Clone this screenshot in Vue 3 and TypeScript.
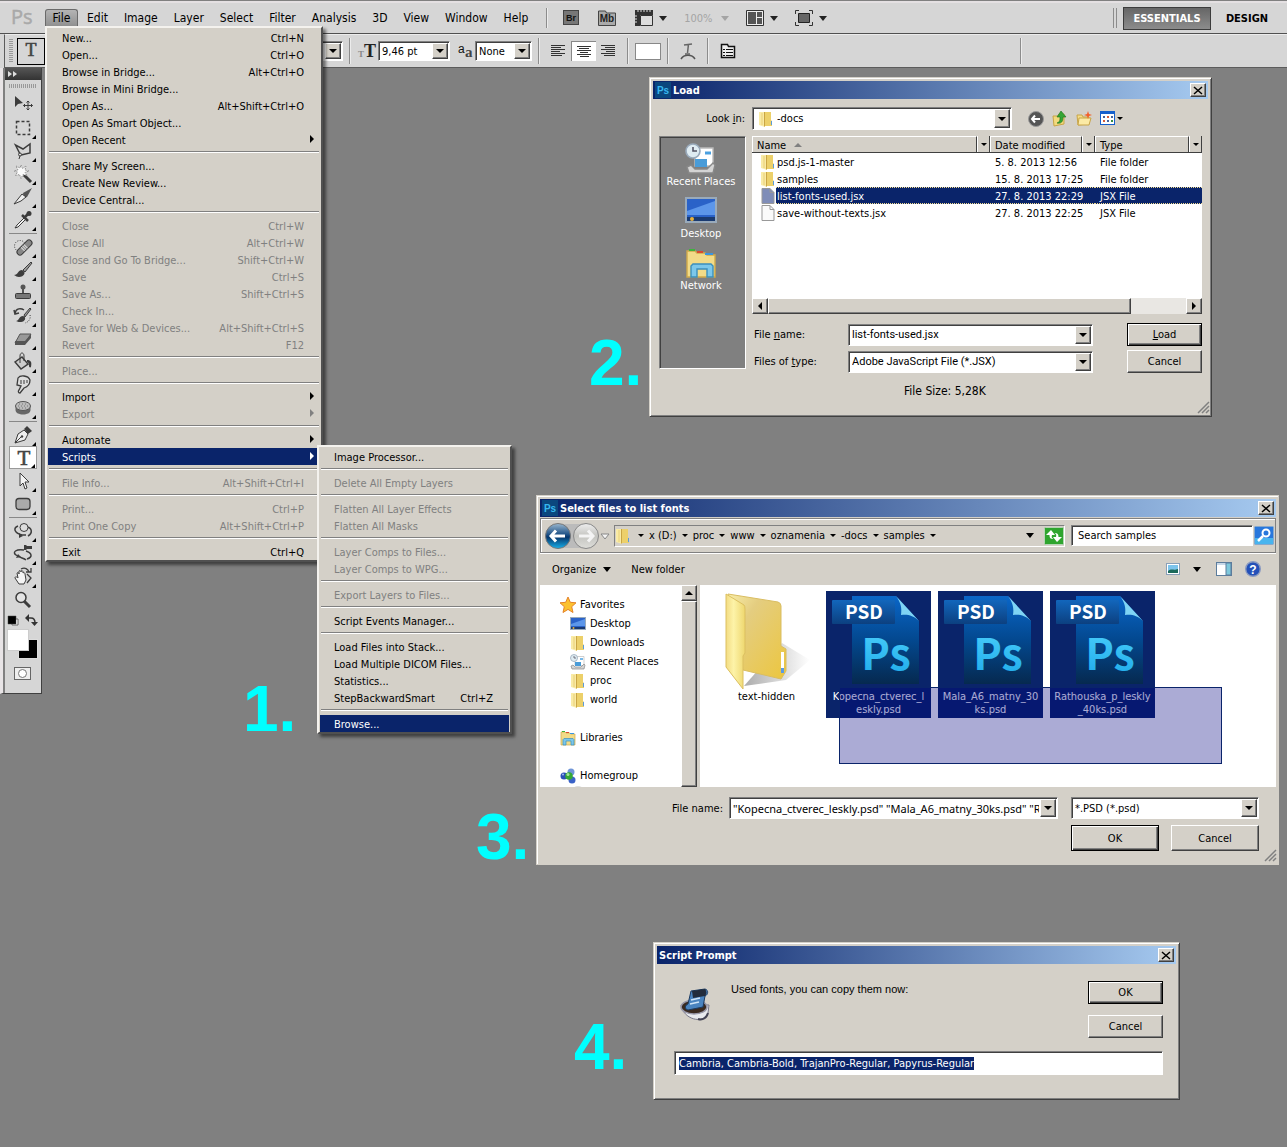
<script setup lang="ts">
import { onMounted, ref } from 'vue'

interface MenuEntry {
  label?: string
  keys?: string
  off?: boolean
  sub?: boolean
  on?: boolean
}

const sep: MenuEntry = {}

const fileMenu: MenuEntry[] = [
  { label: 'New...', keys: 'Ctrl+N' },
  { label: 'Open...', keys: 'Ctrl+O' },
  { label: 'Browse in Bridge...', keys: 'Alt+Ctrl+O' },
  { label: 'Browse in Mini Bridge...' },
  { label: 'Open As...', keys: 'Alt+Shift+Ctrl+O' },
  { label: 'Open As Smart Object...' },
  { label: 'Open Recent', sub: true },
  sep,
  { label: 'Share My Screen...' },
  { label: 'Create New Review...' },
  { label: 'Device Central...' },
  sep,
  { label: 'Close', keys: 'Ctrl+W', off: true },
  { label: 'Close All', keys: 'Alt+Ctrl+W', off: true },
  { label: 'Close and Go To Bridge...', keys: 'Shift+Ctrl+W', off: true },
  { label: 'Save', keys: 'Ctrl+S', off: true },
  { label: 'Save As...', keys: 'Shift+Ctrl+S', off: true },
  { label: 'Check In...', off: true },
  { label: 'Save for Web & Devices...', keys: 'Alt+Shift+Ctrl+S', off: true },
  { label: 'Revert', keys: 'F12', off: true },
  sep,
  { label: 'Place...', off: true },
  sep,
  { label: 'Import', sub: true },
  { label: 'Export', sub: true, off: true },
  sep,
  { label: 'Automate', sub: true },
  { label: 'Scripts', sub: true, on: true },
  sep,
  { label: 'File Info...', keys: 'Alt+Shift+Ctrl+I', off: true },
  sep,
  { label: 'Print...', keys: 'Ctrl+P', off: true },
  { label: 'Print One Copy', keys: 'Alt+Shift+Ctrl+P', off: true },
  sep,
  { label: 'Exit', keys: 'Ctrl+Q' },
]

const scriptsMenu: MenuEntry[] = [
  { label: 'Image Processor...' },
  sep,
  { label: 'Delete All Empty Layers', off: true },
  sep,
  { label: 'Flatten All Layer Effects', off: true },
  { label: 'Flatten All Masks', off: true },
  sep,
  { label: 'Layer Comps to Files...', off: true },
  { label: 'Layer Comps to WPG...', off: true },
  sep,
  { label: 'Export Layers to Files...', off: true },
  sep,
  { label: 'Script Events Manager...' },
  sep,
  { label: 'Load Files into Stack...' },
  { label: 'Load Multiple DICOM Files...' },
  { label: 'Statistics...' },
  { label: 'StepBackwardSmart', keys: 'Ctrl+Z' },
  sep,
  { label: 'Browse...', on: true },
]

const menus = [
  { cls: 'file-menu', items: fileMenu },
  { cls: 'scripts-menu', items: scriptsMenu },
]

const barItems = ['File', 'Edit', 'Image', 'Layer', 'Select', 'Filter', 'Analysis', '3D', 'View', 'Window', 'Help']

interface Tool {
  name: string
  art: string
  flat?: boolean
  active?: boolean
}

const k = '#3c3c3c'
const toolGroups: Tool[][] = [
  [
    { name: 'Move', flat: true, art: `<path d="M2 1v11l3-3 5-1z" fill="${k}"/><path d="M15 6v9M10.500 10.500h9M13.500 7.500l1.500-1.500 1.500 1.500M13.500 13.500l1.500 1.500 1.500-1.500M12 9l-1.500 1.500 1.500 1.500M18 9l1.500 1.500L18 12" fill="none" stroke="${k}"/>` },
    { name: 'Marquee', art: `<rect x="3.500" y="3.500" width="13" height="13" fill="none" stroke="${k}" stroke-width="1.500" stroke-dasharray="3 2"/>` },
    { name: 'Lasso', art: `<path d="M7 13L2.500 4 10 8l7-5v9l-9 2" fill="none" stroke="${k}" stroke-width="1.500"/><circle cx="7" cy="13.500" r="1.500" fill="#ddd" stroke="${k}"/><path d="M7 15l-1 3" stroke="${k}"/>` },
    { name: 'Wand', art: `<path d="M11 11l7 7" stroke="${k}" stroke-width="3"/><path d="M8 1l1.500 3.500L13 2l-1 4 4 1-4 1.500 2 3-4-1-2 4-1.500-4-4 1 2-3.500L1 7l4-1-2-4 4 2z" fill="#fafafa" stroke="#777" stroke-width=".8" stroke-dasharray="1.500 1"/>` },
    { name: 'Slice', art: `<path d="M10 6l9-5-5 9-3 1z" fill="#555"/><path d="M1 17l8-10 4 3-5 4z" fill="#eee" stroke="${k}"/>` },
    { name: 'Eyedropper', art: `<path d="M12 7l-8 8-2 3 3-1 8-8" fill="#f4f4f4" stroke="${k}"/><path d="M9 5l6 6M12 7l4-4" stroke="${k}" stroke-width="2.500"/><circle cx="16" cy="3.500" r="2.500" fill="${k}"/>` },
  ],
  [
    { name: 'Healing Brush', art: `<circle cx="7" cy="9" r="5.500" fill="none" stroke="${k}" stroke-dasharray="1 1.500"/><path d="M7 15l9-9" stroke="${k}" stroke-width="7" stroke-linecap="round"/><path d="M7 15l9-9" stroke="#888" stroke-width="5" stroke-linecap="round"/><path d="M9.500 12.500l4-4" stroke="#ddd" stroke-width="5" stroke-dasharray="1 1"/>` },
    { name: 'Brush', art: `<path d="M10 10l8-8 1 1-7 9z" fill="#999" stroke="${k}"/><path d="M1 15c4 0 4-5 8-5 5 2 2 7-3 7-2 0-3-1-5-2z" fill="${k}"/>` },
    { name: 'Stamp', art: `<circle cx="10" cy="4" r="2.500" fill="#555"/><path d="M9 5h2v5H9z" fill="#555"/><rect x="2.500" y="10.500" width="15" height="5" rx="1" fill="#777" stroke="${k}"/>` },
    { name: 'History Brush', art: `<path d="M11 9l6-7 1 1-6 8z" fill="#999" stroke="${k}"/><path d="M3 15c3 0 3-5 7-5 4 1 2 6-2 6-2 0-3 0-5-1z" fill="${k}"/><path d="M2 7c1-5 6-5 9-3M1 4l1 4 4-1" fill="none" stroke="${k}" stroke-width="1.500"/><path d="M17 9c1 3-1 7-5 8" fill="none" stroke="${k}" stroke-dasharray="1 1.500"/>` },
    { name: 'Eraser', art: `<path d="M7 5h11l-6 9H2z" fill="#999" stroke="#555"/><path d="M2 12l10 0 6-7v4l-6 7H2z" fill="#555"/>` },
    { name: 'Paint Bucket', art: `<path d="M2 10l7-5 6 7-7 5z" fill="#ccc" stroke="${k}" stroke-width="1.500"/><path d="M7 11V4c0-4 4-4 4 0v5" fill="none" stroke="${k}"/><path d="M14 8c4 0 5 2 4 7-1 1-2 0-2-1 0-3-1-4-2-4z" fill="${k}"/>` },
    { name: 'Smudge', art: `<path d="M5 3c2-3 10-3 12 2 0 5-3 7-6 8l-4 5c-2 0-2-2-1-3l2-4-4-1z" fill="#ddd" stroke="${k}" stroke-width="1.300"/><path d="M8 5v4M11 5v4M14 5v3" stroke="${k}"/>` },
    { name: 'Sponge', art: `<path d="M2.500 8v4c0 6 15 6 15 0V8z" fill="#666"/><ellipse cx="10" cy="8" rx="7.500" ry="4.500" fill="#bbb" stroke="#555"/><path d="M5 8h10M6 6h8M6 10h8" stroke="#777" stroke-dasharray="1 2"/>` },
  ],
  [
    { name: 'Pen', art: `<path d="M2 18L5 9l6-4 4 4-3 6z" fill="#eee" stroke="${k}"/><path d="M2 18l6-6" stroke="${k}"/><circle cx="9" cy="11.500" r="1.200" fill="${k}"/><path d="M11 4l3-3 5 5-4 3z" fill="${k}"/>` },
    { name: 'Type', active: true, art: `<text x="11" y="17" font-family="Liberation Serif, serif" font-size="21" text-anchor="middle" fill="#444" stroke="#444" stroke-width=".6">T</text>` },
    { name: 'Path Selection', art: `<path d="M7 2v13l3-3 2 6 2-1-2-6h4z" fill="#f4f4f4" stroke="${k}"/>` },
    { name: 'Rectangle', art: `<rect x="3" y="4.500" width="14" height="11" rx="3" fill="#aaa" stroke="${k}" stroke-width="1.300"/>` },
  ],
  [
    { name: '3D Rotate', art: `<path d="M5 5c-5 2-4 7 4 9h4M14 6c5 1 6 6 1 9" fill="none" stroke="${k}" stroke-width="1.500"/><path d="M6 12l4 3-4 2z" fill="${k}"/><circle cx="11" cy="6.500" r="4" fill="#ddd" stroke="${k}"/>` },
    { name: '3D Camera', art: `<path d="M11 6C3 5-1 8 3 11s8 3 10 5M13 7c6 2 7 6 1 8" fill="none" stroke="${k}" stroke-width="1.500"/><path d="M5 10l3 3-5 1z" fill="${k}"/><path d="M11 1h2l1 1h5v3h-5l-1 1h-2z" fill="${k}"/>` },
    { name: 'Hand', art: `<path d="M6 17l-4-6c0-2 2-1 3 0L4 6c1-1 2 0 2 1V4c1-1 2 0 2 1V4c1-1 2 0 2 1v1c1-1 2 0 2 1l1 6-2 4z" fill="#f4f4f4" stroke="${k}"/><path d="M8 2c4-2 7 0 8 3M13 5h5V1M14 7l4 4-4 5" fill="none" stroke="${k}" stroke-width="1.300"/>` },
    { name: 'Zoom', flat: true, art: `<path d="M11 11l6 6" stroke="${k}" stroke-width="3"/><circle cx="8" cy="7.500" r="5" fill="#e4e4e4" stroke="${k}" stroke-width="1.500"/>` },
  ],
]

const folder = `<path d="M1 1h6v15l-6-2z" fill="#f9eba6"/><path d="M7 1h6v8l1 1v5H7z" fill="#ecd06a"/><path d="M6.500 1v14.500" stroke="#c9a545"/><path d="M4 2v12" stroke="#e9cf78"/><path d="M13 10h1v4h-1z" fill="#5b9bd8"/>`
const sheet = (fill: string) => `<path d="M2 .500h8l4 4v11H2z" fill="${fill}" stroke="#999"/><path d="M10 .500v4h4" fill="none" stroke="#999"/>`
const monitor = `<rect x=".500" y="1.500" width="15" height="12" fill="#2a62c8" stroke="#9ab"/><path d="M1 8L15 3v7H1z" fill="#5c96ea"/><path d="M1 11h14v2H1z" fill="#1a3a70"/><circle cx="3.500" cy="12" r="1" fill="#e8b13c"/>`
const recent = `<path d="M5 2.500h9v9H5z" fill="#fff" stroke="#bbb" stroke-width=".7"/><path d="M10 5h3" stroke="#4aa0e0" stroke-width="1.500"/><path d="M5 8h6v4H5z" fill="#4a9cd8"/><path d="M1 12l2-1 2 2h6l3-3 1 1-1 4H2z" fill="#d4d4d4" stroke="#888" stroke-width=".7"/><circle cx="4" cy="4" r="3.500" fill="#dfecf2" stroke="#9ab" stroke-width=".8"/><path d="M4 2v2h2" fill="none" stroke="#556" stroke-width=".8"/>`
const library = `<path d="M1 2h4l1 1h4l1 1h4v11H1z" fill="#f2db88" stroke="#cfa94a" stroke-width=".7"/><path d="M2 1h3v1H2z" fill="#3eb23e"/><path d="M6 2h3v1H6z" fill="#d84a30"/><path d="M10 3h4v1h-4z" fill="#3a96e0"/><path d="M3 15V9.500l1-1h9l1 1V15h-3v-4H6v4z" fill="#7cc7ea" stroke="#3b8fbd" stroke-width=".7"/>`

const places = [
  { label: 'Recent Places', art: recent },
  { label: 'Desktop', art: monitor },
  { label: 'Network', art: library },
]

const files = [
  { name: 'psd.js-1-master', date: '5. 8. 2013 12:56', type: 'File folder', art: folder },
  { name: 'samples', date: '15. 8. 2013 17:25', type: 'File folder', art: folder },
  { name: 'list-fonts-used.jsx', date: '27. 8. 2013 22:29', type: 'JSX File', art: sheet('#7f8db8'), on: true },
  { name: 'save-without-texts.jsx', date: '27. 8. 2013 22:25', type: 'JSX File', art: sheet('#fafafa') },
]

const crumbs = ['x (D:)', 'proc', 'www', 'oznamenia', '-docs', 'samples']

const tree = [
  { label: 'Favorites', art: `<path d="M8 0l2.300 5.300 5.700.5-4.300 3.900L13 15.500 8 12.400 3 15.500l1.300-5.800L0 5.800l5.700-.5z" fill="#fcc12e" stroke="#e4832a"/>` },
  { label: 'Desktop', child: true, art: monitor },
  { label: 'Downloads', child: true, art: folder },
  { label: 'Recent Places', child: true, art: recent },
  { label: 'proc', child: true, art: folder },
  { label: 'world', child: true, art: folder },
  { label: 'Libraries', gap: true, art: library },
  { label: 'Homegroup', gap: true, art: `<circle cx="11" cy="4" r="3.500" fill="#6f95d8"/><circle cx="4" cy="8" r="3.500" fill="#2b50b8"/><circle cx="12" cy="12" r="3.500" fill="#3a62c8"/><circle cx="9" cy="8" r="3.800" fill="#35a835"/><circle cx="8" cy="6.500" r="1.500" fill="#a5e49c"/><circle cx="3" cy="6.500" r="1" fill="#a9c0f0"/>` },
]

const psds = [
  ['Kopecna_ctverec_l', 'eskly.psd'],
  ['Mala_A6_matny_30', 'ks.psd'],
  ['Rathouska_p_leskly', '_40ks.psd'],
]

const steps = ['1.', '2.', '3.', '4.']

const fontsField = ref<HTMLInputElement | null>(null)
onMounted(() => {
  fontsField.value?.focus({ preventScroll: true })
  fontsField.value?.select()
})
</script>

<template>
  <main class="desk">
    <header class="menubar">
      <svg class="logo" width="24" height="24" viewBox="0 0 24 24"><text x="0" y="18" font-family="Open Sans, sans-serif" font-size="20" fill="#a9a9a9" stroke="#a9a9a9" stroke-width=".5">Ps</text></svg>
      <nav class="bar-items">
        <button v-for="(b, i) in barItems" :key="b" :class="{ open: i === 0 }">{{ b }}</button>
      </nav>
      <i class="rule"></i>
      <div class="launch">
        <button class="chip" aria-label="Bridge"><svg width="17" height="16" viewBox="0 0 17 16"><rect x=".5" y=".5" width="15" height="14" fill="#777" stroke="#444" /><text x="8" y="11" font-size="9" font-weight="bold" font-family="Liberation Sans, sans-serif" text-anchor="middle" fill="#111">Br</text></svg></button>
        <button class="chip" aria-label="Mini Bridge"><svg width="19" height="17" viewBox="0 0 19 17"><path d="M.5 15.500V1h7l1 2h9v12.500z" fill="#aaa" stroke="#444" /><text x="9" y="12" font-size="10" font-weight="bold" font-family="Liberation Sans, sans-serif" text-anchor="middle" fill="#222">Mb</text></svg></button>
        <button class="drop" aria-label="View extras"><svg width="18" height="16" viewBox="0 0 18 16"><path d="M0 0h18v5H5v11H0z" fill="#333" /><path d="M3 0v2M6 0v2M9 0v2M12 0v2M15 0v2M0 6h2M0 9h2M0 12h2" stroke="#ddd" /><path d="M5.500 5.500h12v10h-12z" fill="#ddd" stroke="#333" /></svg><span class="tri"></span></button>
        <button class="drop dim"><span>100%</span><span class="tri"></span></button>
        <button class="drop" aria-label="Arrange documents"><svg width="18" height="16" viewBox="0 0 18 16"><path d="M.5.5h17v15H.5z" fill="#eee" stroke="#333" /><path d="M2 2h8v12H2zM11 2h5v5h-5zM11 8h5v6h-5z" fill="#555" /></svg><span class="tri"></span></button>
        <button class="drop" aria-label="Screen mode"><svg width="18" height="16" viewBox="0 0 18 16"><path d="M.5 4V.5H4M14 .5h3.500V4M17.500 12v3.500H14M4 15.500H.5V12" fill="none" stroke="#333" /><path d="M3.500 3.500h11v9h-11z" fill="#666" stroke="#222" /></svg><span class="tri"></span></button>
      </div>
      <div class="workspaces">
        <button class="essentials">ESSENTIALS</button>
        <button class="design">DESIGN</button>
      </div>
    </header>

    <section class="options">
      <i class="grip"></i>
      <button class="tbox" aria-label="Type tool"><svg width="20" height="20" viewBox="0 0 20 20"><text x="10" y="15" font-family="Liberation Serif, serif" font-size="18" text-anchor="middle" fill="#444" stroke="#444" stroke-width=".6">T</text></svg></button>
      <span class="combo style-combo"><select aria-label="Font style"><option></option></select><span class="dd"></span></span>
      <i class="rule"></i>
      <svg class="tt" width="19" height="22" viewBox="0 0 19 22"><text x="0" y="17" font-family="Liberation Serif, serif" font-size="9" font-weight="bold" fill="#888">T</text><text x="6" y="17" font-family="Liberation Serif, serif" font-size="18" font-weight="bold" fill="#222">T</text></svg>
      <span class="combo size-combo"><select aria-label="Font size"><option>9,46 pt</option></select><span class="dd"></span></span>
      <svg class="aa" width="16" height="18" viewBox="0 0 16 18"><text x="0" y="11" font-family="Liberation Sans, sans-serif" font-size="12" fill="#111">a</text><text x="7" y="15" font-family="Liberation Serif, serif" font-size="15" font-weight="bold" fill="#444">a</text></svg>
      <span class="combo aa-combo"><select aria-label="Anti-aliasing"><option>None</option></select><span class="dd"></span></span>
      <i class="rule"></i>
      <div class="aligns">
        <button aria-label="Left align"><svg width="15" height="14"><path d="M0 1.500h14M0 3.500h10M0 5.500h14M0 7.500h9M0 9.500h14M0 11.500h11" stroke="#333" /></svg></button>
        <button class="pressed" aria-label="Center align"><svg width="15" height="14"><path d="M0 1.500h14M2 3.500h10M0 5.500h14M3 7.500h8M0 9.500h14M3 11.500h9" stroke="#333" /></svg></button>
        <button aria-label="Right align"><svg width="15" height="14"><path d="M0 1.500h14M4 3.500h10M0 5.500h14M5 7.500h9M0 9.500h14M3 11.500h11" stroke="#333" /></svg></button>
      </div>
      <i class="rule"></i>
      <button class="swatch" aria-label="Text color"></button>
      <i class="rule"></i>
      <button class="plain" aria-label="Warp text"><svg width="16" height="18" viewBox="0 0 16 18"><path d="M4 3l8-1M8.500 2L7.500 11M5 12h5" stroke="#666" stroke-width="1.500" fill="none" /><path d="M1 17c3-5 11-5 14 0" stroke="#555" stroke-width="1.500" fill="none" /></svg></button>
      <i class="rule"></i>
      <button class="plain" aria-label="Panels"><svg width="16" height="16" viewBox="0 0 16 16"><path d="M1.500 1.500h6l1 2h6v11h-13z" fill="#eee" stroke="#111" stroke-width="1.500" /><path d="M6 6.500h7M6 9.500h7M6 12.500h7" stroke="#111" /><path d="M3 6.500h2M3 9.500h2M3 12.500h2" stroke="#111" /></svg></button>
      <i class="rule far"></i>
    </section>

    <aside class="tools">
      <div class="tools-head"><svg width="10" height="6"><path d="M0 0l4 3-4 3zM5 0l4 3-4 3z" fill="#ddd" /></svg></div>
      <i class="tools-grip"></i>
      <div v-for="(g, gi) in toolGroups" :key="gi" class="group">
        <button v-for="t in g" :key="t.name" :aria-label="t.name" :class="{ more: !t.flat, active: t.active }">
          <svg width="20" height="20" viewBox="0 0 20 20" v-html="t.art"></svg>
        </button>
      </div>
      <svg class="colors" width="36" height="70" viewBox="0 0 36 70">
        <path d="M7 6h6v6H7z" fill="#fff" stroke="#666" /><path d="M3 3h8v8H3z" fill="#000" stroke="#444" stroke-width=".5" />
        <path d="M22 5h4c3 0 4 2 4 5" fill="none" stroke="#333" stroke-width="1.500" /><path d="M24 1v8l-4-4zM26 9h7l-3.500 4z" fill="#333" />
        <rect x="13.500" y="26.500" width="19" height="19" fill="#000" stroke="#ddd" />
        <rect x="2.500" y="16.500" width="21" height="21" fill="#fff" stroke="#ccc" />
        <rect x="9.500" y="54.500" width="16" height="12" fill="#eee" stroke="#666" /><circle cx="17.500" cy="60.500" r="4" fill="#fff" stroke="#777" />
      </svg>
    </aside>

    <ul v-for="m in menus" :key="m.cls" class="menu" :class="m.cls">
      <li v-for="(e, i) in m.items" :key="i" :class="{ line: !e.label }">
        <button v-if="e.label" :disabled="e.off" :class="{ on: e.on }">
          <span>{{ e.label }}</span>
          <kbd v-if="e.keys">{{ e.keys }}</kbd>
          <svg v-if="e.sub" width="4" height="8"><path d="M0 0l4 4-4 4z" fill="currentColor" /></svg>
        </button>
      </li>
    </ul>

    <strong v-for="(s, i) in steps" :key="s" class="step" :class="'step' + (i + 1)">{{ s }}</strong>

    <section class="win load">
      <header class="title">
        <svg width="16" height="16"><rect width="16" height="16" fill="#0b477e" /><text x="8" y="12" font-size="10" font-weight="bold" font-family="Liberation Sans, sans-serif" text-anchor="middle" fill="#37b8f0">Ps</text></svg>
        <h2>Load</h2>
        <button class="close" aria-label="Close"><svg width="8" height="7"><path d="M0 0l8 7M8 0L0 7" stroke="#000" stroke-width="1.500" /></svg></button>
      </header>
      <div class="look">
        <label for="lookin">Look <u>i</u>n:</label>
        <span class="combo"><svg class="pic" width="16" height="16" v-html="folder"></svg><select id="lookin"><option>-docs</option></select><span class="dd"></span></span>
        <div class="look-tools">
          <button aria-label="Back"><svg width="16" height="16"><circle cx="8" cy="8" r="7.500" fill="#555" stroke="#999" /><path d="M4 8h8M7 4.500L4 8l3 3.500" stroke="#fff" stroke-width="2" fill="none" /></svg></button>
          <button aria-label="Up"><svg width="16" height="16"><path d="M1 5h5l1-2h5v10l-10 2z" fill="#f2d97c" stroke="#c8a548" /><path d="M5 12c3-1 3-3 3-6H5l4-6 5 6h-3c0 5-2 7-6 6z" fill="#35a535" stroke="#1c701c" stroke-width=".6" /></svg></button>
          <button aria-label="New folder"><svg width="16" height="16"><path d="M1 4h5l1 2h6v7l-11 1z" fill="#f5dc86" stroke="#c8a548" /><path d="M3 7h12l-2 7H2z" fill="#fbeaa5" stroke="#c8a548" /><path d="M12 0l1 3 3 1-3 1-1 3-1-3-3-1 3-1z" fill="#f2602a" /></svg></button>
          <button class="views" aria-label="Views"><svg width="15" height="15"><rect x=".5" y=".5" width="14" height="13" fill="#fff" stroke="#1560cc" /><path d="M0 0h15v3H0z" fill="#1560cc" /><path d="M3 6h2M11 6h2M7 10h2" stroke="#45639c" stroke-width="2" /><path d="M7 6h2M3 10h2" stroke="#d85c38" stroke-width="2" /><path d="M11 10h2" stroke="#338a45" stroke-width="2" /></svg><span class="tri small"></span></button>
        </div>
      </div>
      <div class="load-mid">
        <nav class="places">
          <button v-for="p in places" :key="p.label"><svg width="32" height="32" viewBox="0 0 16 16" v-html="p.art"></svg>{{ p.label }}</button>
        </nav>
        <div class="load-main">
          <div class="list">
            <table>
              <thead>
                <tr>
                  <th class="c1"><div><span>Name <i class="up"></i></span><b></b></div></th>
                  <th class="c2"><div><span>Date modified</span><b></b></div></th>
                  <th><div><span>Type</span><b></b></div></th>
                </tr>
              </thead>
              <tbody>
                <tr v-for="f in files" :key="f.name" :class="{ on: f.on }">
                  <td><div class="cell"><svg width="16" height="16" v-html="f.art"></svg><span>{{ f.name }}</span></div></td>
                  <td>{{ f.date }}</td>
                  <td>{{ f.type }}</td>
                </tr>
              </tbody>
            </table>
            <div class="hscroll"><button aria-label="Scroll left"><svg width="4" height="8"><path d="M4 0v8L0 4z" /></svg></button><i></i><button aria-label="Scroll right"><svg width="4" height="8"><path d="M0 0v8l4-4z" /></svg></button></div>
          </div>
          <div class="load-form">
            <label for="fname">File <u>n</u>ame:</label>
            <span class="combo"><input id="fname" class="tight" value="list-fonts-used.jsx" /><span class="dd"></span></span>
            <button class="btn default"><span><u>L</u>oad</span></button>
            <label for="ftype">Files of <u>t</u>ype:</label>
            <span class="combo"><select id="ftype" class="tight"><option>Adobe JavaScript File (*.JSX)</option></select><span class="dd"></span></span>
            <button class="btn">Cancel</button>
          </div>
        </div>
      </div>
      <p class="fsize">File Size: 5,28K</p>
      <svg class="sizer" width="12" height="12"><path d="M12 1L1 12M12 5l-7 7M12 9l-3 3" stroke="#808080" stroke-width="1.500" /></svg>
    </section>

    <section class="win pick">
      <header class="title">
        <svg width="16" height="16"><rect width="16" height="16" fill="#0b477e" /><text x="8" y="12" font-size="10" font-weight="bold" font-family="Liberation Sans, sans-serif" text-anchor="middle" fill="#37b8f0">Ps</text></svg>
        <h2>Select files to list fonts</h2>
        <button class="close" aria-label="Close"><svg width="8" height="7"><path d="M0 0l8 7M8 0L0 7" stroke="#000" stroke-width="1.500" /></svg></button>
      </header>
      <div class="address">
        <div class="travel">
          <svg width="66" height="28" viewBox="0 0 66 28">
            <defs>
              <linearGradient id="bk" x2="0" y2="1"><stop offset="0" stop-color="#9ab8d0" /><stop offset=".45" stop-color="#1c4f84" /><stop offset=".55" stop-color="#06366c" /><stop offset="1" stop-color="#18b0ea" /></linearGradient>
              <linearGradient id="fw" x2="0" y2="1"><stop offset="0" stop-color="#eee" /><stop offset=".5" stop-color="#c4c4c0" /><stop offset="1" stop-color="#dededa" /></linearGradient>
            </defs>
            <path d="M14 2h28v24H14z" fill="#bbb" />
            <circle cx="14" cy="14" r="12.500" fill="url(#bk)" stroke="#777" /><circle cx="42" cy="14" r="12.500" fill="url(#fw)" stroke="#888" />
            <path d="M7 14h14M12 8.500L7 14l5 5.500" stroke="#fff" stroke-width="3" fill="none" />
            <path d="M35 14h14M44 8.500l5 5.500-5 5.500" stroke="#f4f4f4" stroke-width="3" fill="none" />
            <path d="M57 12h8l-4 5z" fill="#f4f4f4" stroke="#888" />
          </svg>
        </div>
        <div class="path">
          <svg width="16" height="16" v-html="folder"></svg>
          <span class="tri small first"></span>
          <template v-for="c in crumbs" :key="c"><a href="#">{{ c }}</a><span class="tri small"></span></template>
          <span class="tri end"></span>
          <button class="refresh" aria-label="Refresh"><svg width="20" height="18"><rect x=".5" y=".5" width="19" height="17" rx="1" fill="#2fa52f" stroke="#b4d4b4" /><path d="M7 3L2 8h3.500c0 3 1 4 4 4-2-1-2-2-1.500-4H11zM13 15l5-5h-3.500c0-3-1-4-4-4 2 1 2 2 1.500 4H9z" fill="#fff" /></svg></button>
        </div>
        <div class="search">
          <input aria-label="Search samples" value="Search samples" />
          <button aria-label="Search"><svg width="20" height="19"><rect x=".5" y=".5" width="19" height="18" rx="1" fill="#2877dc" stroke="#86a8cc" /><path d="M1 12h18v6H1z" fill="#48b4ee" /><circle cx="12" cy="7" r="3.500" fill="none" stroke="#fff" stroke-width="2" /><path d="M9 10l-5 5" stroke="#fff" stroke-width="2.500" /></svg></button>
        </div>
      </div>
      <div class="commands">
        <button class="organize">Organize <span class="tri"></span></button>
        <button>New folder</button>
        <div class="cmd-right">
          <svg width="14" height="12"><rect x=".5" y=".5" width="13" height="11" fill="#fff" stroke="#8aa0b8" /><path d="M2 2h10v8H2z" fill="#7cc4ec" /><path d="M2 8c4-3 5 0 10-2v4H2z" fill="#1c6a5a" /></svg>
          <span class="tri"></span>
          <svg class="pane-i" width="16" height="14"><rect x=".5" y=".5" width="15" height="13" fill="#fff" stroke="#5c7c9c" /><path d="M1 1h14v2H1z" fill="#c8d8e8" /><path d="M10 1h5v12h-5z" fill="#7ec8dc" stroke="#5c7c9c" /></svg>
          <svg width="16" height="16"><circle cx="8" cy="8" r="7.300" fill="#2450b8" stroke="#8a9ac0" stroke-width="1.400" /><text x="8" y="12.500" font-size="12" font-weight="bold" font-family="Liberation Sans, sans-serif" text-anchor="middle" fill="#fff">?</text></svg>
        </div>
      </div>
      <div class="browser">
        <nav class="tree">
          <div class="tree-items">
            <a v-for="t in tree" :key="t.label" href="#" :class="{ child: t.child, gap: t.gap }"><svg width="16" height="16" v-html="t.art"></svg>{{ t.label }}</a>
            <i class="ghost"></i>
          </div>
          <div class="vscroll"><button aria-label="Scroll up"><svg width="8" height="4"><path d="M0 4h8L4 0z" /></svg></button><i></i></div>
        </nav>
        <div class="pane">
          <figure class="tile">
            <svg width="105" height="98" viewBox="0 0 105 98">
              <defs>
                <linearGradient id="fa" x2="1"><stop offset="0" stop-color="#f3dc83" /><stop offset=".4" stop-color="#fdf3a8" /><stop offset="1" stop-color="#eed76f" /></linearGradient>
                <linearGradient id="fb" x2="1" y2="1"><stop offset="0" stop-color="#f8eda8" /><stop offset=".3" stop-color="#e4cd80" /><stop offset="1" stop-color="#ecc63e" /></linearGradient>
                <linearGradient id="fs" x2="1"><stop offset="0" stop-color="#888" /><stop offset="1" stop-color="#fff" /></linearGradient>
              </defs>
              <path d="M68 52l28 17-24 20-42 6z" fill="url(#fs)" opacity=".7" />
              <path d="M14 3l50 8q3 1 3 4v40l5 3v22l-5 8-38-9z" fill="url(#fb)" stroke="#d9bd62" />
              <path d="M67 61h3v16h-3z" fill="#fff" /><path d="M67 77h3v5h-3z" fill="#5b9be4" />
              <path d="M12 3l18 11q1 1 1 4v44l-2 3v33L12 76z" fill="url(#fa)" stroke="#dcc060" />
            </svg>
            <figcaption>text-hidden</figcaption>
          </figure>
          <figure v-for="(p, i) in psds" :key="i" class="tile picked">
            <svg width="105" height="98" viewBox="0 0 105 98">
              <defs>
                <linearGradient :id="'pg' + i" x2="0" y2="1"><stop offset="0" stop-color="#0a66c8" /><stop offset=".5" stop-color="#03488f" /><stop offset="1" stop-color="#06294f" /></linearGradient>
                <linearGradient :id="'pl' + i" x2="0" y2="1"><stop offset="0" stop-color="#1266bc" /><stop offset="1" stop-color="#0c4080" /></linearGradient>
                <linearGradient :id="'pt' + i" x2="0" y2="1"><stop offset="0" stop-color="#50d4ff" /><stop offset="1" stop-color="#1ca8e8" /></linearGradient>
              </defs>
              <path d="M26 5h44l23 25v63H26z" :fill="`url(#pg${i})`" />
              <path d="M70 5l23 25c-6-6-12-7-18-6 1-7 0-12-5-19z" fill="#7fd4f4" />
              <rect x="6" y="9" width="63" height="24" rx="1" :fill="`url(#pl${i})`" />
              <text x="38" y="28" class="badge" font-size="19" text-anchor="middle" fill="#fff">PSD</text>
              <text x="60" y="79" class="badge" font-size="43" text-anchor="middle" :fill="`url(#pt${i})`">Ps</text>
            </svg>
            <figcaption>{{ p[0] }}<br />{{ p[1] }}</figcaption>
          </figure>
          <i class="lasso"></i>
        </div>
      </div>
      <div class="pick-form">
        <label for="pname">File name:</label>
        <span class="combo names"><input id="pname" value="&quot;Kopecna_ctverec_leskly.psd&quot; &quot;Mala_A6_matny_30ks.psd&quot; &quot;Rathouska_p_leskly_40ks.psd&quot;" /><span class="dd"></span></span>
        <span class="combo kinds"><select aria-label="File type"><option>*.PSD (*.psd)</option></select><span class="dd"></span></span>
      </div>
      <div class="pick-buttons">
        <button class="btn default"><span>OK</span></button>
        <button class="btn">Cancel</button>
      </div>
      <svg class="sizer" width="12" height="12"><path d="M12 1L1 12M12 5l-7 7M12 9l-3 3" stroke="#808080" stroke-width="1.500" /></svg>
    </section>

    <section class="win prompt">
      <header class="title">
        <h2>Script Prompt</h2>
        <button class="close" aria-label="Close"><svg width="8" height="7"><path d="M0 0l8 7M8 0L0 7" stroke="#000" stroke-width="1.500" /></svg></button>
      </header>
      <div class="prompt-top">
        <svg width="32" height="36" viewBox="0 0 32 36">
          <path d="M2 18c2 14 22 20 27 8l1-8z" fill="#e8eaee" stroke="#778" />
          <ellipse cx="15" cy="20" rx="13" ry="7" fill="#3a2a20" stroke="#99a" stroke-width="1.500" />
          <path d="M12 4l14-2c4 1 3 6 0 7l-2 11-15 3c-4-1-3-5 0-6z" fill="#4a84c0" stroke="#1c3a60" />
          <path d="M13 4l13-2c2 2 2 5 0 7l-12 2z" fill="#222c3c" /><path d="M12 13l9-2M11 17l9-2" stroke="#cfe4f8" stroke-width="1.500" />
          <path d="M19 32c5 2 9-2 10-6" stroke="#445" stroke-width="2" fill="none" />
        </svg>
        <label for="fonts">Used fonts, you can copy them now:</label>
        <div class="prompt-buttons">
          <button class="btn default"><span>OK</span></button>
          <button class="btn">Cancel</button>
        </div>
      </div>
      <input id="fonts" ref="fontsField" class="sunk" value="Cambria, Cambria-Bold, TrajanPro-Regular, Papyrus-Regular" />
    </section>
  </main>
</template>

<style>
body {
  margin: 0;
  background: #808080;
}
</style>

<style scoped>
* {
  box-sizing: border-box;
}
.desk {
  position: relative;
  min-height: 100vh;
  overflow: hidden;
  background: #808080;
  padding-top: 1px;
  font: 11px/13px 'DejaVu Sans Condensed', 'Noto Sans', sans-serif;
  color: #000;
}
svg {
  display: block;
  flex: none;
  overflow: visible;
}
button {
  font: inherit;
  color: inherit;
  background: none;
  border: 0;
  padding: 0;
  display: flex;
  align-items: center;
  justify-content: center;
}
a {
  color: inherit;
  text-decoration: none;
}
input,
select {
  font: inherit;
  color: #000;
  background: transparent;
  border: 0;
  outline: 0;
  padding: 0;
  margin: 0;
  border-radius: 0;
  appearance: none;
  min-width: 0;
}
.tri {
  border: 4px solid transparent;
  border-top: 5px solid currentColor;
  border-bottom: 0;
}
.tri.small {
  border-width: 3px;
  border-bottom: 0;
}

/* application bar */
.menubar {
  height: 33px;
  display: flex;
  align-items: center;
  background: #d6d6d6;
  border-top: 2px solid #e4e0e2;
  border-bottom: 1px solid #505050;
  padding: 0 4px 0 11px;
  font-size: 12px;
}
.logo {
  margin-right: 10px;
}
.bar-items {
  display: flex;
}
.bar-items button {
  height: 19px;
  padding: 0 8px;
}
.bar-items .open {
  width: 33px;
  padding: 0;
  margin-right: 1px;
  border: 1px solid #6a6a6a;
  border-bottom: 0;
  border-radius: 3px 3px 0 0;
  background: linear-gradient(#b4b4b4, #8c8c8c);
}
.rule {
  width: 2px;
  height: 26px;
  background: #8c8c8c;
  border-right: 1px solid #ececec;
  flex: none;
}
.menubar .rule {
  height: 20px;
  margin-left: 10px;
}
.launch {
  display: flex;
  align-items: center;
  margin-left: 15px;
}
.chip {
  margin-right: 18px;
}
.launch .drop {
  gap: 6px;
  margin-right: 17px;
  color: #222;
}
.launch .dim {
  color: #a4a4a4;
  gap: 8px;
  font-size: 11px;
}
.workspaces {
  margin-left: auto;
  display: flex;
  align-items: center;
  border-left: 4px double #8c8c8c;
  padding-left: 6px;
  font-weight: bold;
  font-size: 11px;
  height: 20px;
}
.workspaces button {
  height: 23px;
  width: 88px;
}
.workspaces .essentials {
  color: #fff;
  border: 1px solid #3c3c3c;
  background: linear-gradient(#666, #8c8c8c);
}
.workspaces .design {
  width: 72px;
}

/* options bar */
.options {
  height: 34px;
  display: flex;
  align-items: center;
  background: #d6d6d6;
  border-bottom: 1px solid #5c5c5c;
  border-top: 1px solid #ececec;
  margin-left: 4px;
  border-left: 1px solid #5c5c5c;
  box-shadow: -4px 0 #d6d6d6;
}
.grip {
  width: 4px;
  height: 24px;
  margin-left: 4px;
  background: repeating-linear-gradient(#999 0 1px, transparent 1px 2px);
}
.tbox {
  margin-left: 4px;
  width: 28px;
  height: 27px;
  border: 1px solid #000;
}
.combo {
  position: relative;
  display: flex;
  align-items: center;
  height: 22px;
  background: #fff;
  border: 1px solid;
  border-color: #808080 #fff #fff #808080;
  box-shadow: inset 1px 1px #404040;
}
.combo input,
.combo select {
  flex: 1;
  height: 100%;
  padding: 0 18px 0 3px;
}
.combo .tight {
  font-family: Roboto, 'Liberation Sans', sans-serif;
}
.combo .dd {
  position: absolute;
  right: 1px;
  top: 1px;
  bottom: 1px;
  width: 16px;
  pointer-events: none;
  background: #d4d0c8;
  border: 1px solid;
  border-color: #fff #404040 #404040 #fff;
  box-shadow: inset -1px -1px #808080;
  display: flex;
  align-items: center;
  justify-content: center;
}
.combo .dd::after {
  content: '';
  border: 4px solid transparent;
  border-top-color: #000;
  border-bottom: 0;
}
.options .combo {
  height: 20px;
}
.style-combo {
  width: 284px;
  margin: 0 6px 0 14px;
}
.tt {
  margin: 0 1px 0 7px;
}
.size-combo {
  width: 72px;
}
.aa {
  margin: 0 1px 0 8px;
}
.aa-combo {
  width: 57px;
  margin-right: 6px;
}
.aligns {
  display: flex;
  margin: 0 6px 0 6px;
}
.aligns button {
  width: 25px;
  height: 20px;
}
.aligns .pressed {
  background: #fff;
  border-top: 1px solid #888;
  border-left: 1px solid #888;
}
.swatch {
  width: 26px;
  height: 17px;
  background: #fff;
  border: 1px solid #888;
  margin: 0 6px;
}
.plain {
  margin: 0 11px;
}
.options .far {
  margin-left: auto;
  margin-right: 265px;
}

/* tool palette */
.tools {
  width: 42px;
  height: 626px;
  background: #d6d6d6;
  border-left: 3px solid #e8e4e6;
  border-right: 1px solid #404040;
  border-bottom: 1px solid #404040;
  box-shadow: inset 2px 0 #808080;
  padding-left: 2px;
  display: flex;
  flex-direction: column;
}
.tools-head {
  height: 12px;
  background: linear-gradient(#555, #333);
  padding: 3px;
}
.tools-grip {
  height: 4px;
  margin: 4px 4px 5px;
  background: repeating-linear-gradient(90deg, #999 0 1px, transparent 1px 2px);
}
.group {
  margin: 0 4px;
}
.group + .group {
  border-top: 1px solid #888;
  margin-top: 2px;
  padding-top: 1px;
}
.group button {
  position: relative;
  width: 28px;
  height: 23px;
}
.group .more::after {
  content: '';
  position: absolute;
  right: 1px;
  bottom: 0;
  border: 2px solid #000;
  border-top-color: transparent;
  border-left-color: transparent;
}
.group .active {
  background: #fff;
  border: 1px solid #999;
}
.colors {
  margin-top: 2px;
}

/* menus */
.menu {
  position: absolute;
  list-style: none;
  margin: 0;
  padding: 1px 1px 0;
  background: #d4d0c8;
  border: 2px solid;
  border-color: #f4f2ee #505050 #505050 #f4f2ee;
  box-shadow: 3px 3px 3px rgba(0, 0, 0, 0.5);
}
.file-menu {
  left: 45px;
  top: 26px;
  width: 278px;
}
.scripts-menu {
  left: 317px;
  top: 445px;
  width: 195px;
}
.menu button {
  width: 100%;
  height: 17px;
  padding: 2px 16px 0 14px;
  justify-content: flex-start;
}
.menu button:disabled {
  color: #808080;
}
.menu .on {
  background: #0a246a;
  color: #fff;
}
.menu kbd {
  font: inherit;
  margin-left: auto;
}
.menu svg {
  margin: 0 -10px 4px auto;
}
.line {
  height: 2px;
  margin: 3px 1px 4px;
  background: #808080;
  border-bottom: 1px solid #fff;
}

/* step numbers */
.step {
  position: absolute;
  font: bold 64px/64px 'Liberation Sans', sans-serif;
  color: #0ff;
}
.step1 {
  left: 243px;
  top: 677px;
}
.step2 {
  left: 589px;
  top: 331px;
}
.step3 {
  left: 476px;
  top: 805px;
}
.step4 {
  left: 574px;
  top: 1015px;
}

/* dialogs */
.win {
  position: absolute;
  background: #d4d0c8;
  border: 1px solid;
  border-color: #d4d0c8 #404040 #404040 #d4d0c8;
  box-shadow: inset 1px 1px #fff, inset -1px -1px #808080;
  padding: 3px;
}
.title {
  height: 18px;
  display: flex;
  align-items: center;
  padding: 0 2px;
  background: linear-gradient(90deg, #0a246a, #a6caf0);
  color: #fff;
}
.title h2 {
  margin: 0 0 0 2px;
  font-size: 11px;
  font-weight: bold;
}
.title h2:first-child {
  margin: 0;
}
.close,
.btn,
.hscroll button,
.hscroll i,
.vscroll button,
.vscroll i {
  background: #d4d0c8;
  border: 1px solid;
  border-color: #fff #404040 #404040 #fff;
  box-shadow: inset -1px -1px #808080;
}
.close {
  width: 16px;
  height: 14px;
  margin-left: auto;
}
.btn {
  width: 75px;
  height: 23px;
}
.btn.default {
  border-color: #000;
  box-shadow: inset 1px 1px #fff, inset -1px -1px #404040, inset -2px -2px #808080;
}
.sizer {
  position: absolute;
  right: 2px;
  bottom: 3px;
}

.load {
  left: 649px;
  top: 77px;
  width: 563px;
  height: 340px;
}
.look {
  display: flex;
  align-items: center;
  margin: 8px 0 6px;
}
.look label {
  width: 99px;
  padding-right: 7px;
  text-align: right;
}
.look .combo {
  width: 260px;
  height: 23px;
}
.look .pic {
  margin-left: 5px;
}
.look-tools {
  display: flex;
  gap: 8px;
  margin-left: 16px;
}
.look-tools .views {
  gap: 2px;
}
.load-mid {
  display: flex;
  gap: 6px;
  padding: 0 6px;
}
.places {
  width: 87px;
  height: 233px;
  background: #808080;
  color: #fff;
  border: 1px solid;
  border-color: #808080 #fff #fff #808080;
  box-shadow: inset 1px 1px #404040;
  padding: 6px 3px 0 0;
}
.places button {
  width: 100%;
  flex-direction: column;
  margin-bottom: 7px;
}
.load-main {
  flex: 1;
}
.list {
  height: 178px;
  background: #fff;
  display: flex;
  flex-direction: column;
}
table {
  width: 100%;
  table-layout: fixed;
  border-collapse: collapse;
}
th,
td {
  padding: 0;
  text-align: left;
  font-weight: normal;
}
.c1 {
  width: 238px;
}
.c2 {
  width: 105px;
}
th div {
  display: flex;
  height: 17px;
  background: #d4d0c8;
  border-bottom: 1px solid #404040;
}
th span {
  flex: 1;
  padding: 2px 0 0 4px;
  border-left: 1px solid #fff;
  border-top: 1px solid #fff;
  border-right: 1px solid #404040;
}
th b {
  width: 13px;
  border-right: 1px solid #404040;
  border-left: 1px solid #fff;
  display: flex;
  align-items: center;
  justify-content: center;
}
th b::after {
  content: '';
  border: 3px solid transparent;
  border-top-color: #000;
  border-bottom: 0;
}
.up {
  display: inline-block;
  margin: 0 0 2px 5px;
  border: 4px solid transparent;
  border-bottom-color: #808080;
  border-top: 0;
}
td {
  height: 17px;
  padding: 1px 0 0 5px;
}
td:first-child {
  padding-left: 8px;
}
.cell {
  display: flex;
  align-items: center;
  gap: 1px;
  height: 16px;
}
.on td {
  color: #fff;
  background: repeating-linear-gradient(90deg, #f0dc90 0 1px, transparent 1px 2px) 0 0 / 100% 1px no-repeat,
    repeating-linear-gradient(90deg, #f0dc90 0 1px, transparent 1px 2px) 0 100% / 100% 1px no-repeat, #0a246a;
}
.on td:first-child {
  background: linear-gradient(#fff, #fff) 0 0 / 24px 100% no-repeat,
    repeating-linear-gradient(90deg, #f0dc90 0 1px, transparent 1px 2px) 0 0 / 100% 1px no-repeat,
    repeating-linear-gradient(90deg, #f0dc90 0 1px, transparent 1px 2px) 0 100% / 100% 1px no-repeat, #0a246a;
}
.hscroll {
  margin-top: auto;
  height: 16px;
  display: flex;
  background: #e9e7e3;
}
.hscroll button {
  width: 16px;
}
.hscroll i {
  width: 363px;
  margin-right: auto;
}
.load-form {
  display: grid;
  grid-template-columns: 94px 245px 1fr;
  row-gap: 4px;
  align-items: center;
  margin: 9px 0 0 2px;
}
.load-form .btn {
  justify-self: end;
}
.fsize {
  margin: 12px 0 0 251px;
  font-size: 12px;
}

.pick {
  left: 536px;
  top: 495px;
  width: 743px;
  height: 370px;
  border-right-color: #d4d0c8;
  border-bottom-color: #d4d0c8;
  box-shadow: inset 1px 1px #fff;
  padding-right: 2px;
}
.address {
  height: 35px;
  margin-top: 1px;
  border: 1px solid #808080;
  box-shadow: inset 1px 1px #fff, 0 1px #fff;
  display: flex;
  align-items: center;
  padding: 0 1px 0 3px;
}
.path {
  flex: 1;
  margin-left: 4px;
  height: 22px;
  display: flex;
  align-items: center;
  gap: 5px;
  border: 1px solid;
  border-color: #808080 #fff #fff #808080;
}
.path .first {
  margin-left: 2px;
}
.path .end {
  margin-left: auto;
  margin-right: 5px;
}
.search {
  width: 203px;
  margin-left: 6px;
  display: flex;
  align-items: center;
  justify-content: space-between;
}
.search input,
.sunk {
  background: #fff;
  border: 1px solid;
  border-color: #808080 #fff #fff #808080;
  box-shadow: inset 1px 1px #404040;
}
.search input {
  width: 182px;
  height: 21px;
  padding-left: 6px;
}
.commands {
  height: 32px;
  display: flex;
  align-items: center;
  gap: 20px;
  padding: 0 15px 0 12px;
}
.organize {
  gap: 7px;
}
.cmd-right {
  margin-left: auto;
  display: flex;
  align-items: center;
  gap: 13px;
}
.cmd-right .pane-i {
  margin-left: 2px;
}
.browser {
  display: flex;
  gap: 3px;
  height: 202px;
}
.tree {
  width: 157px;
  background: #fff;
  display: flex;
  justify-content: space-between;
  overflow: hidden;
}
.tree-items {
  padding: 10px 0 0 20px;
}
.tree a {
  display: flex;
  align-items: center;
  gap: 4px;
  height: 19px;
}
.tree .child {
  padding-left: 10px;
}
.tree .gap {
  margin-top: 19px;
}
.ghost {
  display: block;
  width: 14px;
  height: 14px;
  margin: 1px 0 0 11px;
  border-radius: 50%;
  background: #ddd;
}
.vscroll {
  width: 16px;
  display: flex;
  flex-direction: column;
}
.vscroll button {
  width: 16px;
  height: 16px;
}
.vscroll i {
  flex: 1;
}
.pane {
  position: relative;
  flex: 1;
  background: #fff;
  display: flex;
  align-items: flex-start;
  gap: 7px;
  padding: 6px 0 0 14px;
}
.tile {
  margin: 0;
  width: 105px;
  height: 127px;
  text-align: center;
}
.picked {
  background: #0a246a;
  color: #fff;
}
.tile figcaption {
  padding-top: 1px;
  white-space: nowrap;
}
.badge {
  font-family: 'Noto Sans CJK SC', 'Open Sans', sans-serif;
  font-weight: bold;
}
.lasso {
  position: absolute;
  left: 139px;
  top: 102px;
  width: 383px;
  height: 77px;
  border: 1px solid #0a246a;
  background: rgba(0, 0, 128, 0.33);
}
.pick-form {
  display: flex;
  align-items: center;
  justify-content: flex-end;
  margin: 10px 17px 6px 0;
}
.pick-form label {
  margin-right: 6px;
}
.names {
  width: 329px;
  margin-right: 13px;
}
.names input {
  font-family: 'Noto Sans', sans-serif;
}
.kinds {
  width: 188px;
}
.pick-buttons {
  display: flex;
  justify-content: flex-end;
  gap: 12px;
  margin-right: 17px;
}
.pick-buttons .btn {
  width: 88px;
  height: 26px;
}

.prompt {
  left: 653px;
  top: 942px;
  width: 527px;
  height: 158px;
}
.prompt-top {
  display: flex;
  align-items: flex-start;
  padding: 17px 13px 0 22px;
}
.prompt-top > svg {
  margin-top: 6px;
}
.prompt label {
  margin: 2px 0 0 20px;
  font-family: 'Liberation Sans', sans-serif;
}
.prompt-buttons {
  margin-left: auto;
  display: flex;
  flex-direction: column;
  gap: 11px;
}
.sunk {
  display: block;
  width: 489px;
  height: 24px;
  margin: 13px 0 0 17px;
  padding: 0 4px;
}
.sunk::selection {
  background: #0a246a;
  color: #fff;
}
</style>
